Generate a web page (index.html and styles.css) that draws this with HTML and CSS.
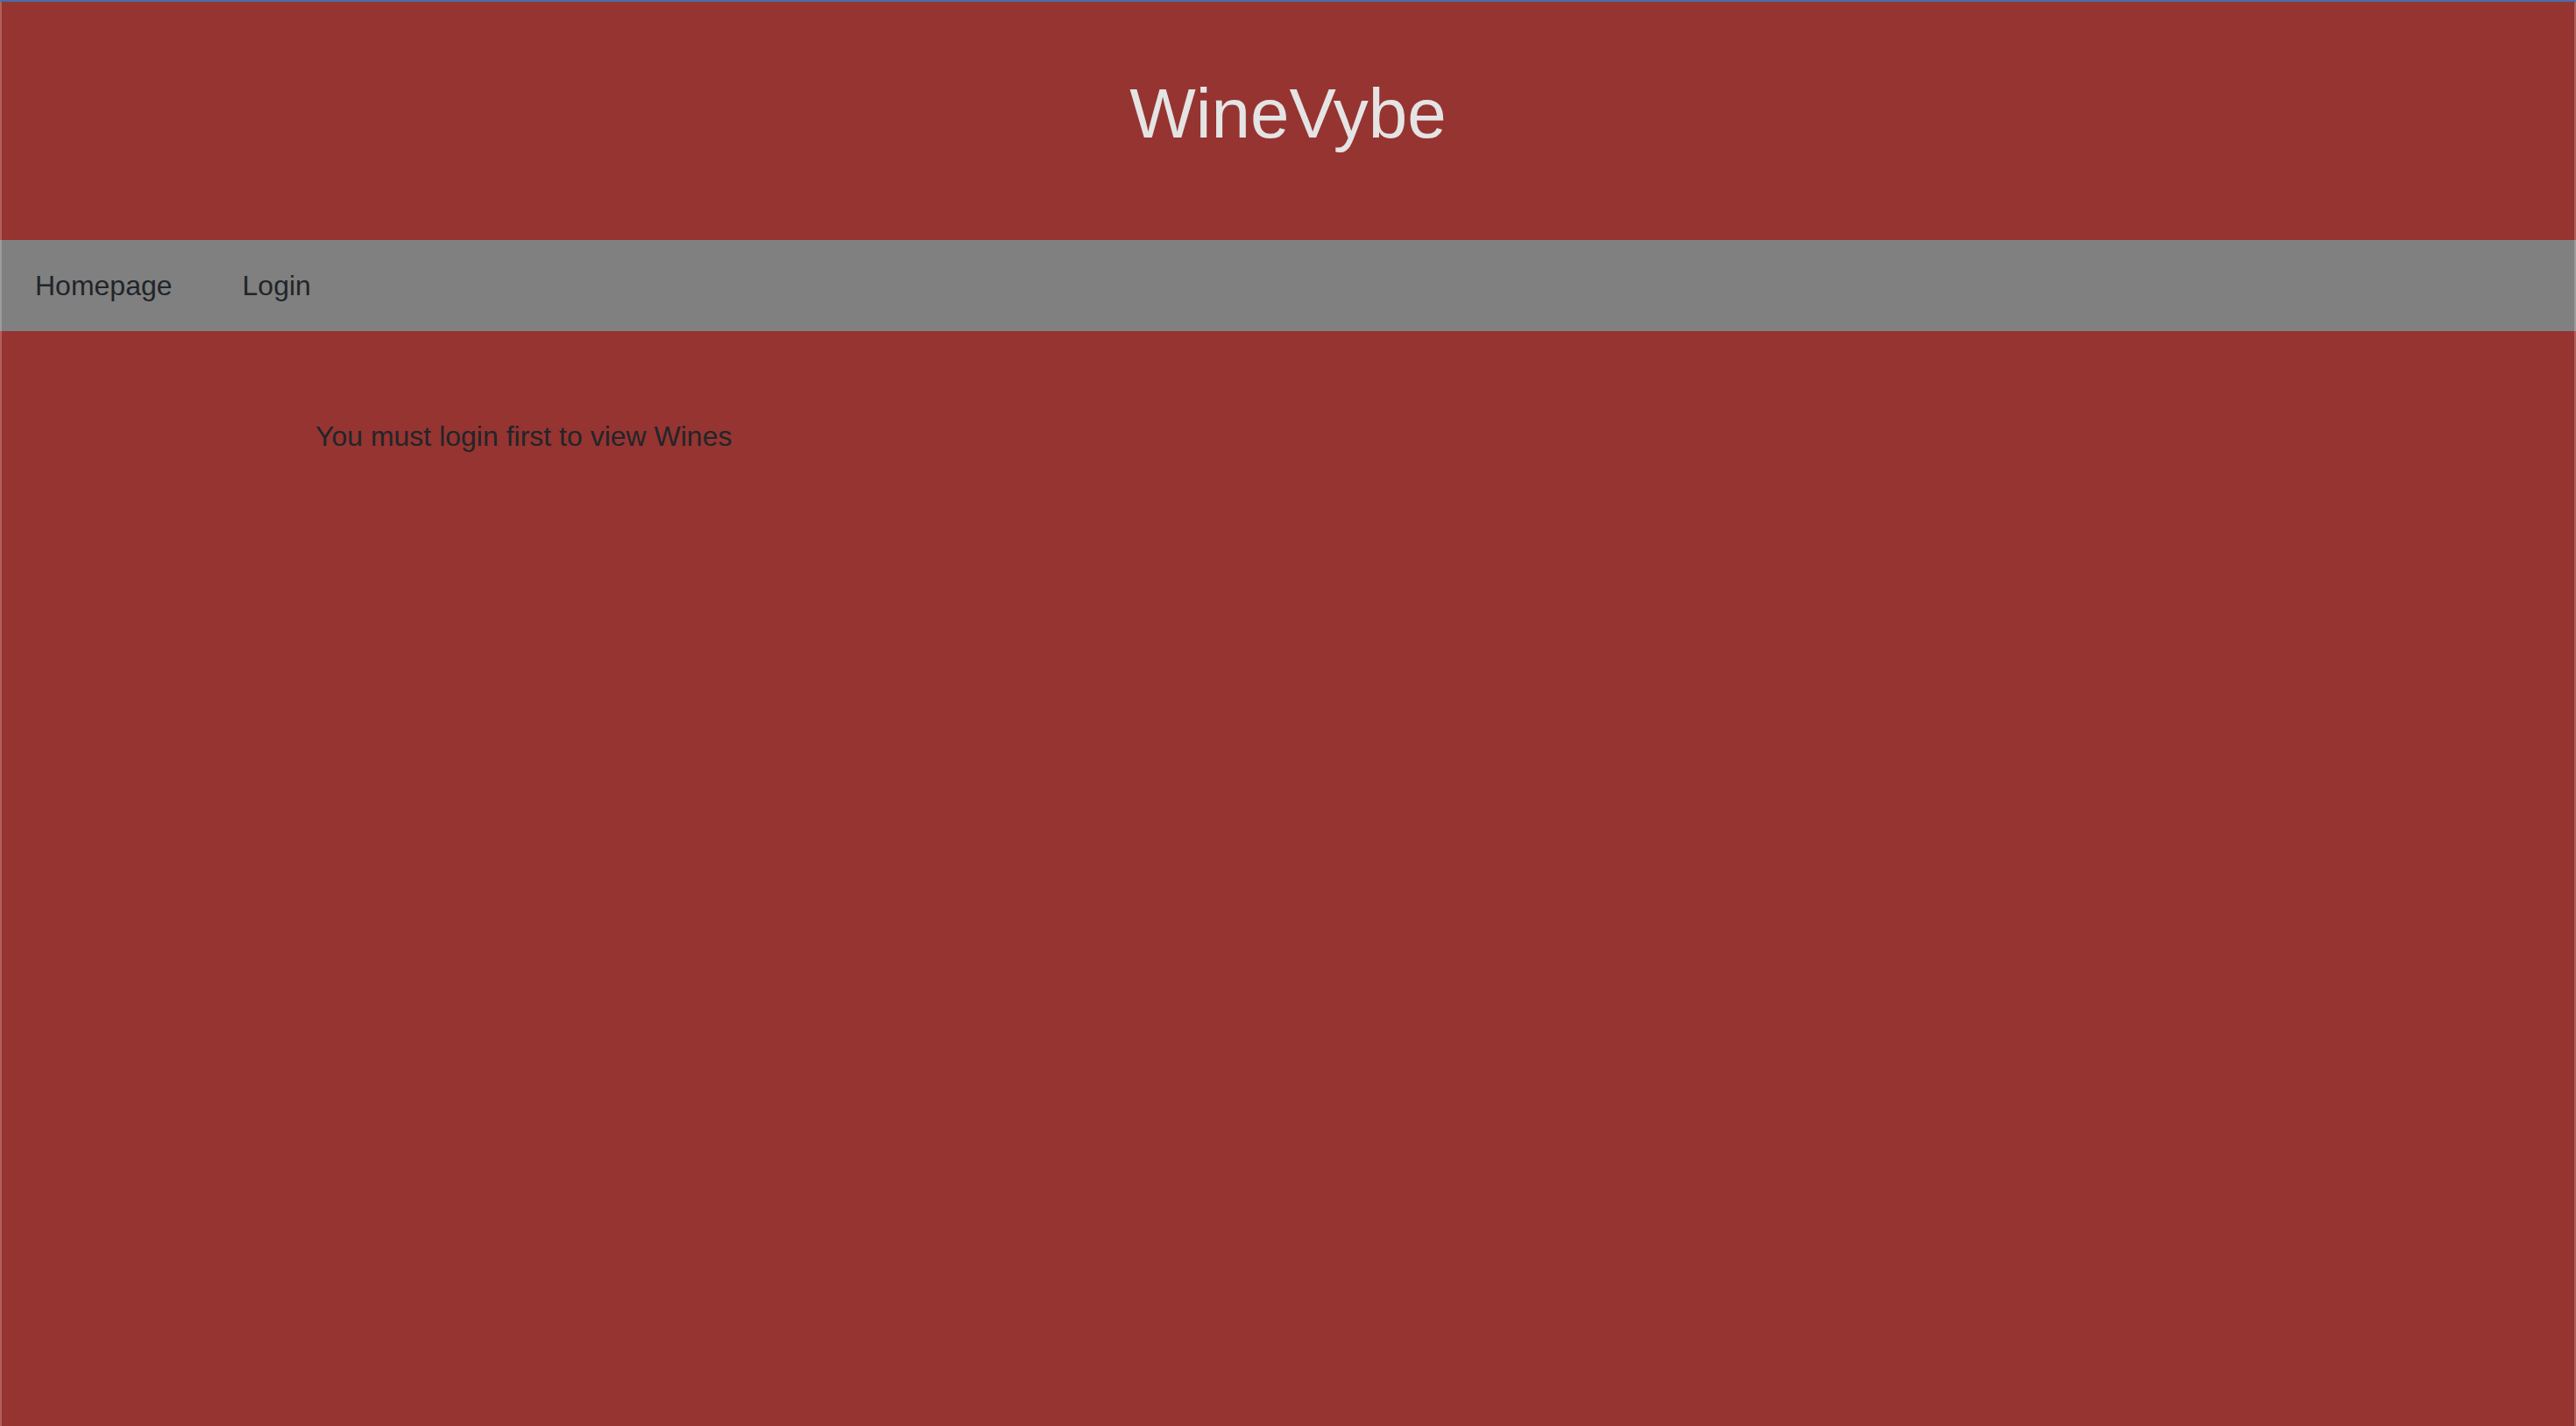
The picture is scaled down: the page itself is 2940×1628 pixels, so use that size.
FILE: index.html
```html
<!DOCTYPE html>
<html lang="en">
<head>
<meta charset="utf-8">
<title>WineVybe</title>
<link rel="stylesheet" href="styles.css">
</head>
<body>
<div class="page">
  <header class="masthead">
    <h1 class="brand">WineVybe</h1>
  </header>
  <nav class="navbar">
    <a class="nav-link" href="#">Homepage</a>
    <a class="nav-link" href="#">Login</a>
  </nav>
  <main class="content">
    <p class="notice">You must login first to view Wines</p>
  </main>
</div>
<div class="frame"></div>
</body>
</html>
```
FILE: styles.css
```css
html, body {
  margin: 0;
  padding: 0;
  height: 100%;
}
body {
  background: #963431;
  font-family: "Liberation Sans", Arial, sans-serif;
  color: #212529;
  font-size: 32px;
  line-height: 1.5;
}
.page {
  min-height: 100%;
  box-sizing: border-box;
  border-top: 2px solid #4a6ea8;
}
.masthead {
  background: #963431;
  padding: 80px 0;
  text-align: center;
}
.brand {
  margin: 0 0 16px 0;
  font-size: 80px;
  font-weight: 400;
  line-height: 1.2;
  color: #e4e4e4;
}
.navbar {
  background: #808080;
  display: flex;
  padding: 28px 0 28px 0;
}
.nav-link {
  color: #212529;
  text-decoration: none;
  padding: 0 40px;
}
.content {
  padding: 96px 0 0 360px;
}
.notice {
  margin: 0;
}
.frame {
  position: fixed;
  top: 2px;
  left: 0;
  right: 0;
  bottom: 0;
  border-left: 2px solid rgba(255, 255, 255, 0.22);
  border-right: 2px solid rgba(255, 255, 255, 0.22);
  pointer-events: none;
}
```
